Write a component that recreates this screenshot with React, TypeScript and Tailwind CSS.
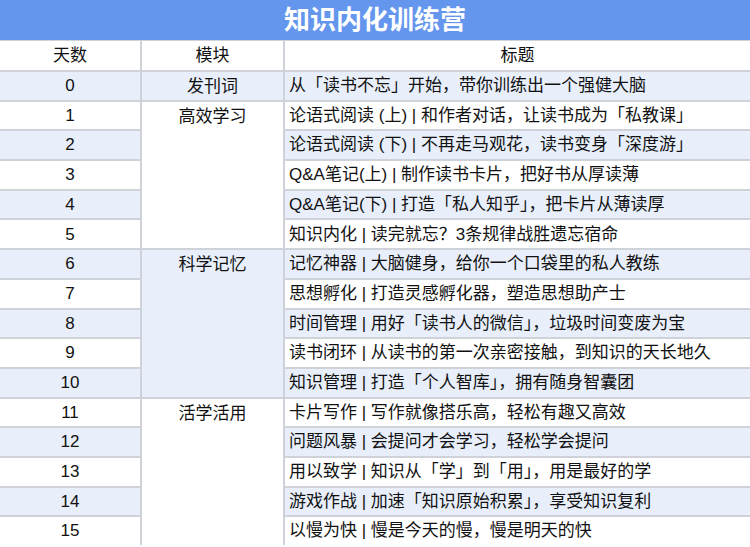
const rows: [string, string][] = [
  ['0', '从「读书不忘」开始，带你训练出一个强健大脑'],
  ['1', '论语式阅读 (上) | 和作者对话，让读书成为「私教课」'],
  ['2', '论语式阅读 (下) | 不再走马观花，读书变身「深度游」'],
  ['3', 'Q&A笔记(上) | 制作读书卡片，把好书从厚读薄'],
  ['4', 'Q&A笔记(下) | 打造「私人知乎」，把卡片从薄读厚'],
  ['5', '知识内化 | 读完就忘？3条规律战胜遗忘宿命'],
  ['6', '记忆神器 | 大脑健身，给你一个口袋里的私人教练'],
  ['7', '思想孵化 | 打造灵感孵化器，塑造思想助产士'],
  ['8', '时间管理 | 用好「读书人的微信」，垃圾时间变废为宝'],
  ['9', '读书闭环 | 从读书的第一次亲密接触，到知识的天长地久'],
  ['10', '知识管理 | 打造「个人智库」，拥有随身智囊团'],
  ['11', '卡片写作 | 写作就像搭乐高，轻松有趣又高效'],
  ['12', '问题风暴 | 会提问才会学习，轻松学会提问'],
  ['13', '用以致学 | 知识从「学」到「用」，用是最好的学'],
  ['14', '游戏作战 | 加速「知识原始积累」，享受知识复利'],
  ['15', '以慢为快 | 慢是今天的慢，慢是明天的快'],
]

const modules: { name: string; start: number; span: number }[] = [
  { name: '发刊词', start: 0, span: 1 },
  { name: '高效学习', start: 1, span: 5 },
  { name: '科学记忆', start: 6, span: 5 },
  { name: '活学活用', start: 11, span: 5 },
]

const bg = (i: number) => (i % 2 === 0 ? 'bg-[#e8effb]' : 'bg-white')

export default function App() {
  return (
    <div
      className="w-[750px] h-[547px] overflow-hidden bg-white text-[#111] text-[17px]"
      style={{ fontFamily: '"Liberation Sans", "Noto Sans CJK SC", sans-serif' }}
    >
      <div className="h-[40px] bg-[#6496ee] flex items-center justify-center text-white text-[26px] font-bold">
        知识内化训练营
      </div>
      <div className="grid grid-cols-[140px_141px_1fr] grid-rows-[29px_repeat(16,27.7px)] bg-[#cfd3d9] gap-[2px] pt-[1px]">
        <div className="bg-white flex items-center justify-center">天数</div>
        <div className="bg-white flex items-center justify-center">模块</div>
        <div className="bg-white flex items-center justify-center">标题</div>
        {rows.map(([d], i) => (
          <div key={'d' + i} className={`${bg(i)} flex items-center justify-center col-start-1`} style={{ gridRowStart: i + 2 }}>
            {d}
          </div>
        ))}
        {modules.map((m) => (
          <div
            key={m.name}
            className={`${bg(m.start)} flex justify-center pt-[2px] col-start-2`}
            style={{ gridRow: `${m.start + 2} / span ${m.span}` }}
          >
            {m.name}
          </div>
        ))}
        {rows.map(([, t], i) => (
          <div key={'t' + i} className={`${bg(i)} flex items-center pl-[4px] whitespace-nowrap overflow-hidden col-start-3`} style={{ gridRowStart: i + 2 }}>
            {t}
          </div>
        ))}
      </div>
    </div>
  )
}
